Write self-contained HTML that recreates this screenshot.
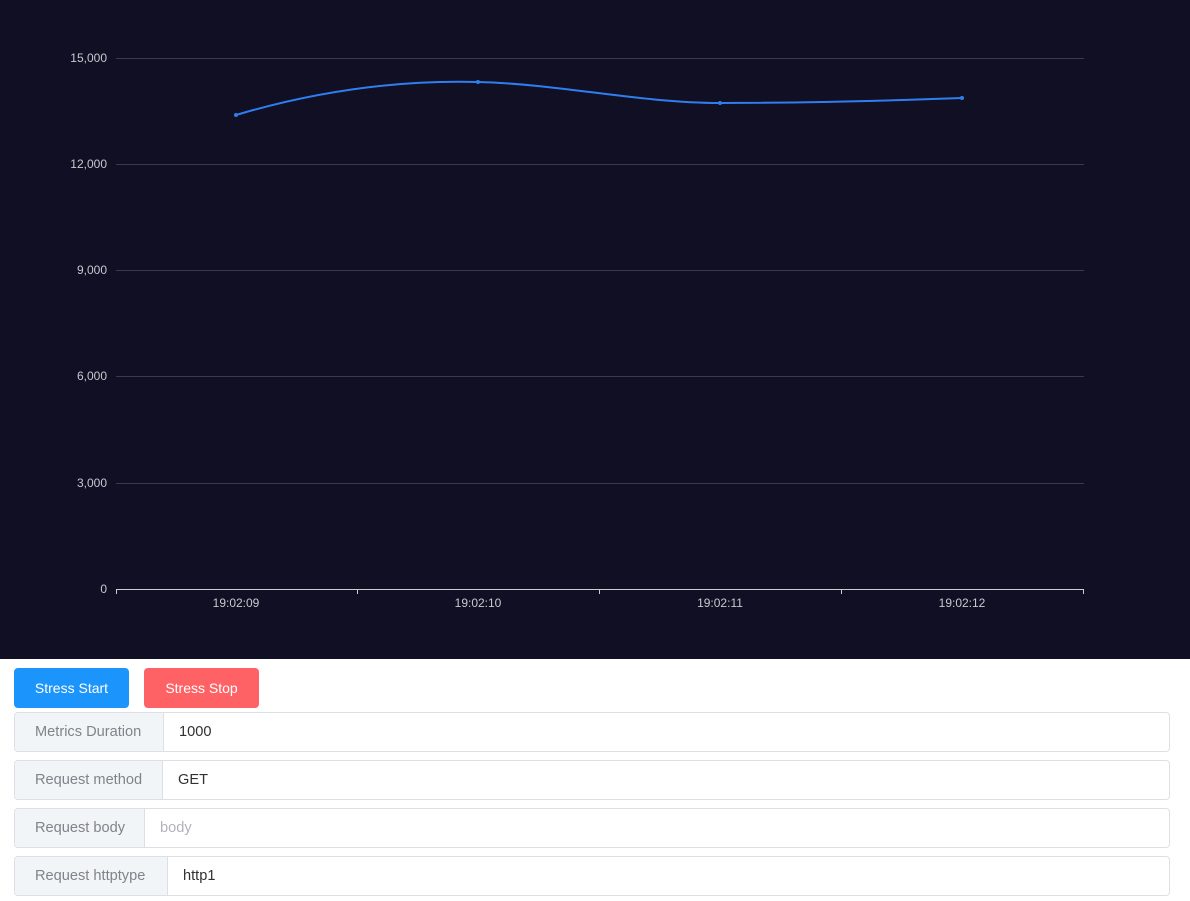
<!DOCTYPE html>
<html><head><style>
body{margin:0;width:1190px;height:901px;background:#fff;font-family:"Liberation Sans",Arial,sans-serif;position:relative;overflow:hidden}
.chart{position:absolute;left:0;top:0;width:1190px;height:659px;background:#100f23}
.btn{position:absolute;top:668px;height:40px;width:115px;border-radius:4px;color:#fff;font-size:14px;line-height:40px;text-align:center}
.row{position:absolute;left:14px;width:1154px;height:38px;border:1px solid #dcdfe6;border-radius:4px;display:flex;font-size:14.6px}
.lab{background:#f2f5f8;color:#80838a;border-right:1px solid #dcdfe6;padding-left:20px;line-height:38px;box-sizing:border-box;border-radius:4px 0 0 4px;white-space:nowrap}
.val{line-height:38px;padding-left:15px;color:#606266}
</style></head><body>
<div class="chart">
<svg width="1190" height="659" font-family="Liberation Sans,Arial,sans-serif" font-size="12" fill="#ccc">
<g stroke="#3a3a48" stroke-width="1">
<line x1="116" x2="1084" y1="58.5" y2="58.5"/><line x1="116" x2="1084" y1="164.5" y2="164.5"/><line x1="116" x2="1084" y1="270.5" y2="270.5"/><line x1="116" x2="1084" y1="376.5" y2="376.5"/><line x1="116" x2="1084" y1="483.5" y2="483.5"/>
</g>
<g stroke="#ccc"><line x1="116" x2="1084" y1="589.5" y2="589.5"/>
<line x1="116.5" x2="116.5" y1="589" y2="594"/><line x1="357.5" x2="357.5" y1="589" y2="594"/><line x1="599.5" x2="599.5" y1="589" y2="594"/><line x1="841.5" x2="841.5" y1="589" y2="594"/><line x1="1083.5" x2="1083.5" y1="589" y2="594"/></g>
<g text-anchor="end" fill="#c8c8d0"><text x="107" y="62">15,000</text><text x="107" y="168">12,000</text><text x="107" y="274">9,000</text><text x="107" y="380">6,000</text><text x="107" y="487">3,000</text><text x="107" y="593">0</text></g>
<g text-anchor="middle" fill="#c8c8d0"><text x="236" y="607">19:02:09</text><text x="478" y="607">19:02:10</text><text x="720" y="607">19:02:11</text><text x="962" y="607">19:02:12</text></g>
<path d="M236,115 C320,90 400,80 478,82 C560,84 640,103 720,103 C800,103 880,101 962,98" fill="none" stroke="#2f7ef0" stroke-width="2"/>
<g fill="#2f7ef0"><circle cx="236" cy="115" r="2"/><circle cx="478" cy="82" r="2"/><circle cx="720" cy="103" r="2"/><circle cx="962" cy="98" r="2"/></g>
</svg>
</div>
<div class="btn" style="left:14px;background:#1b95fc">Stress Start</div>
<div class="btn" style="left:144px;background:#fe6265">Stress Stop</div>
<div class="row" style="top:712px"><div class="lab" style="width:149px">Metrics Duration</div><div class="val" style="color:#303133">1000</div></div>
<div class="row" style="top:760px"><div class="lab" style="width:148px">Request method</div><div class="val" style="color:#303133">GET</div></div>
<div class="row" style="top:808px"><div class="lab" style="width:130px">Request body</div><div class="val" style="color:#b0b3b8">body</div></div>
<div class="row" style="top:856px"><div class="lab" style="width:153px">Request httptype</div><div class="val" style="color:#303133">http1</div></div>
</body></html>
